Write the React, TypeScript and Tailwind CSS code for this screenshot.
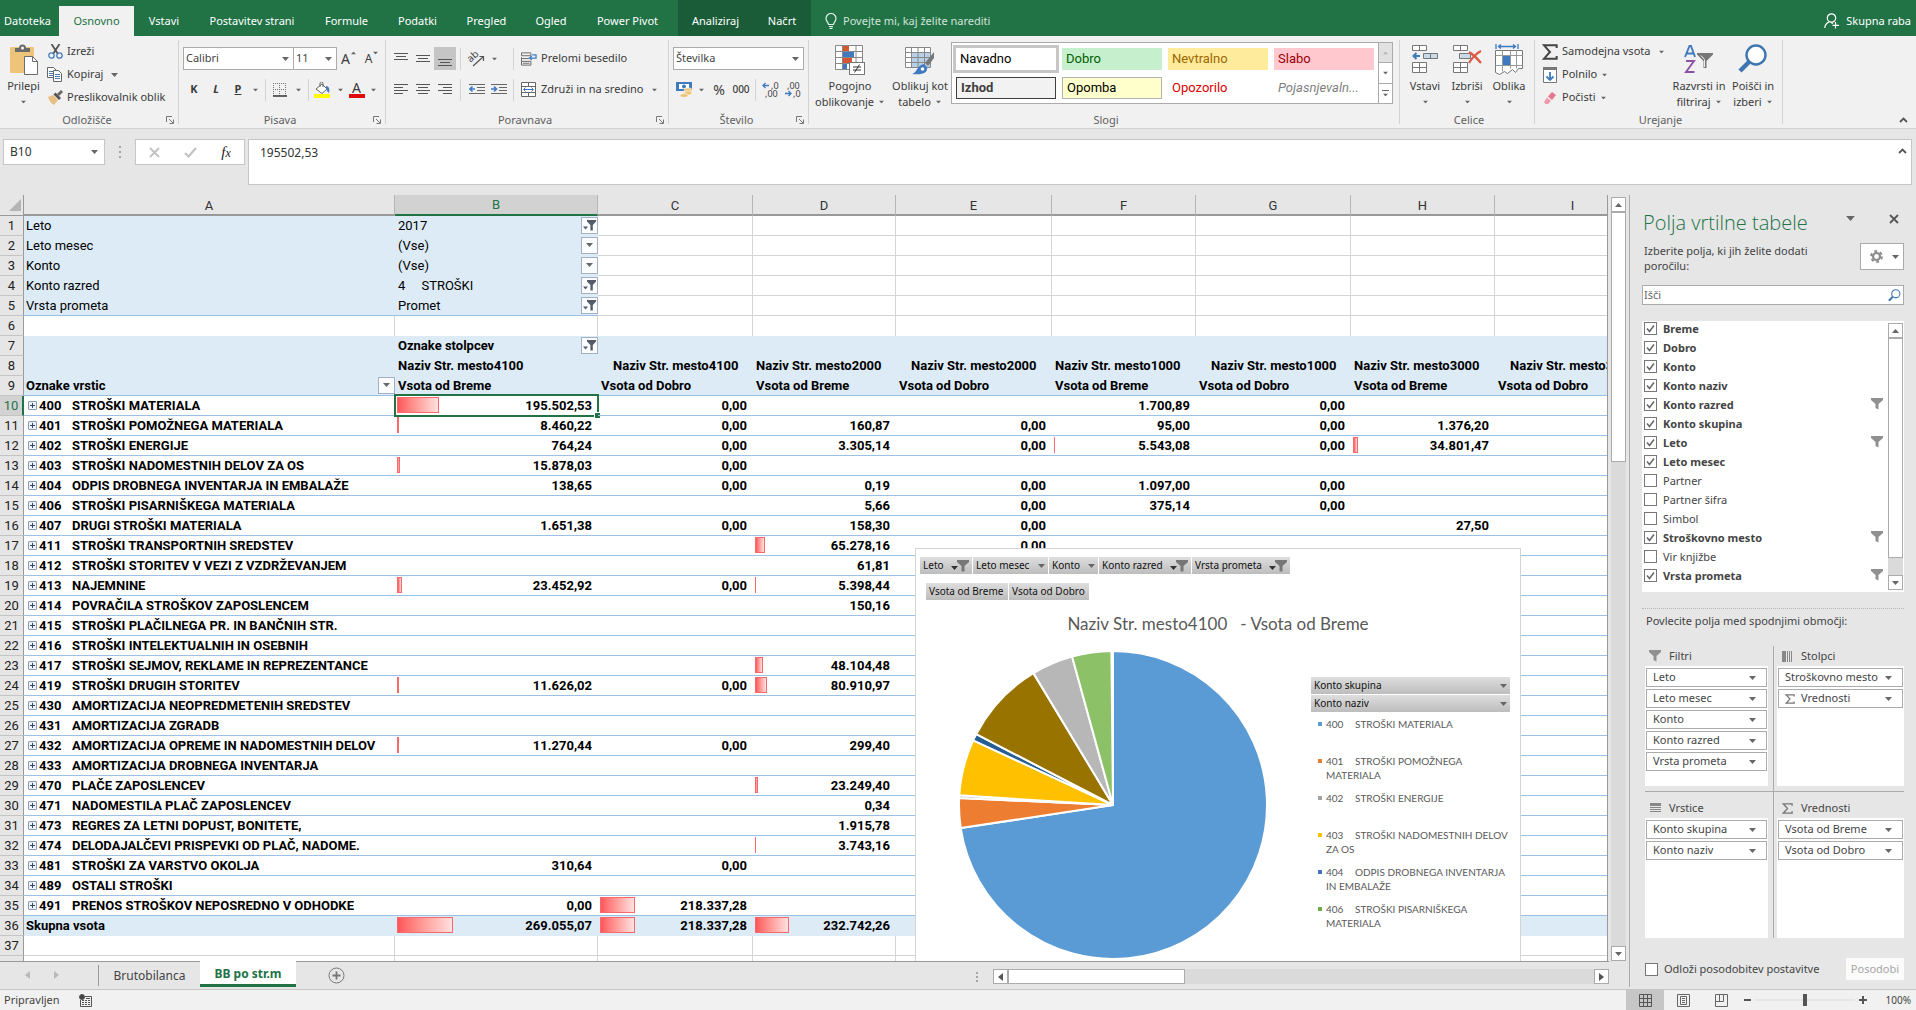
import { ReactNode } from "react";
import clsx from "clsx";

const ribbonTabs = [
  { text: "Datoteka", width: "w-[55px] mr-1" },
  { text: "Osnovno", width: "w-[75px]", active: true },
  { text: "Vstavi", width: "w-[60px]" },
  { text: "Postavitev strani", width: "w-[116px]" },
  { text: "Formule", width: "w-[73px]" },
  { text: "Podatki", width: "w-[69px]" },
  { text: "Pregled", width: "w-[69px]" },
  { text: "Ogled", width: "w-[60px]" },
  { text: "Power Pivot", width: "w-[93px] mr-1" },
  { text: "Analiziraj", width: "w-[75px]", context: true },
  { text: "Načrt", width: "w-[58px]", context: true },
];

const styleCells = [
  { text: "Navadno", style: "bg-white text-black outline-3 outline-[#c6c6c6]" },
  { text: "Dobro", style: "bg-[#c6efce] text-[#006100]" },
  { text: "Nevtralno", style: "bg-[#ffeb9c] text-[#9c6500]" },
  { text: "Slabo", style: "bg-[#ffc7ce] text-[#9c0006]" },
  { text: "Izhod", style: "border border-[#3f3f3f] bg-[#f2f2f2] font-bold text-[#3f3f3f]" },
  { text: "Opomba", style: "border border-[#b2b2b2] bg-[#ffffcc] text-black" },
  { text: "Opozorilo", style: "text-[#e00000]" },
  { text: "Pojasnjevaln...", style: "text-[#7f7f7f] italic" },
];

const columns = [
  { name: "A", width: "w-[371px]" },
  { name: "B", width: "w-[203px]" },
  { name: "C", width: "w-[155px]" },
  { name: "D", width: "w-[143px]" },
  { name: "E", width: "w-[156px]" },
  { name: "F", width: "w-[144px]" },
  { name: "G", width: "w-[155px]" },
  { name: "H", width: "w-[144px]" },
  { name: "I", width: "w-[156px]" },
];

const pageFilters = [
  { label: "Leto", value: "2017", filtered: true },
  { label: "Leto mesec", value: "(Vse)", filtered: false },
  { label: "Konto", value: "(Vse)", filtered: false },
  { label: "Konto razred", value: "4     STROŠKI", filtered: true },
  { label: "Vrsta prometa", value: "Promet", filtered: true },
];

const places = ["4100", "4100", "2000", "2000", "1000", "1000", "3000", "3000"];

type Row = { code: string; name: string; values: string[]; bars?: number[] };

// bars holds the data bar width of each value column, in pixels
const rows: Row[] = [
  { code: "400", name: "STROŠKI MATERIALA", values: ["195.502,53", "0,00", "", "", "1.700,89", "0,00"], bars: [42] },
  { code: "401", name: "STROŠKI POMOŽNEGA MATERIALA", values: ["8.460,22", "0,00", "160,87", "0,00", "95,00", "0,00", "1.376,20"], bars: [2] },
  { code: "402", name: "STROŠKI ENERGIJE", values: ["764,24", "0,00", "3.305,14", "0,00", "5.543,08", "0,00", "34.801,47"], bars: [0, 0, 0, 0, 1, 0, 5] },
  { code: "403", name: "STROŠKI NADOMESTNIH DELOV ZA OS", values: ["15.878,03", "0,00"], bars: [3] },
  { code: "404", name: "ODPIS DROBNEGA INVENTARJA IN EMBALAŽE", values: ["138,65", "0,00", "0,19", "0,00", "1.097,00", "0,00"] },
  { code: "406", name: "STROŠKI PISARNIŠKEGA MATERIALA", values: ["", "", "5,66", "0,00", "375,14", "0,00"] },
  { code: "407", name: "DRUGI STROŠKI MATERIALA", values: ["1.651,38", "0,00", "158,30", "0,00", "", "", "27,50"] },
  { code: "411", name: "STROŠKI TRANSPORTNIH SREDSTEV", values: ["", "", "65.278,16", "0,00"], bars: [0, 0, 10] },
  { code: "412", name: "STROŠKI STORITEV V VEZI Z VZDRŽEVANJEM", values: ["", "", "61,81"] },
  { code: "413", name: "NAJEMNINE", values: ["23.452,92", "0,00", "5.398,44"], bars: [5, 0, 1] },
  { code: "414", name: "POVRAČILA STROŠKOV ZAPOSLENCEM", values: ["", "", "150,16"] },
  { code: "415", name: "STROŠKI PLAČILNEGA PR. IN BANČNIH STR.", values: [] },
  { code: "416", name: "STROŠKI INTELEKTUALNIH IN OSEBNIH", values: [] },
  { code: "417", name: "STROŠKI SEJMOV, REKLAME IN REPREZENTANCE", values: ["", "", "48.104,48"], bars: [0, 0, 8] },
  { code: "419", name: "STROŠKI DRUGIH STORITEV", values: ["11.626,02", "0,00", "80.910,97"], bars: [2, 0, 12] },
  { code: "430", name: "AMORTIZACIJA NEOPREDMETENIH SREDSTEV", values: [] },
  { code: "431", name: "AMORTIZACIJA ZGRADB", values: [] },
  { code: "432", name: "AMORTIZACIJA OPREME IN NADOMESTNIH DELOV", values: ["11.270,44", "0,00", "299,40"], bars: [2] },
  { code: "433", name: "AMORTIZACIJA DROBNEGA INVENTARJA", values: [] },
  { code: "470", name: "PLAČE ZAPOSLENCEV", values: ["", "", "23.249,40"], bars: [0, 0, 3] },
  { code: "471", name: "NADOMESTILA PLAČ ZAPOSLENCEV", values: ["", "", "0,34"] },
  { code: "473", name: "REGRES ZA LETNI DOPUST, BONITETE,", values: ["", "", "1.915,78"] },
  { code: "474", name: "DELODAJALČEVI PRISPEVKI OD PLAČ, NADOME.", values: ["", "", "3.743,16"], bars: [0, 0, 1] },
  { code: "481", name: "STROŠKI ZA VARSTVO OKOLJA", values: ["310,64", "0,00"] },
  { code: "489", name: "OSTALI STROŠKI", values: [] },
  { code: "491", name: "PRENOS STROŠKOV NEPOSREDNO V ODHODKE", values: ["0,00", "218.337,28"], bars: [0, 35] },
];

const totals = ["269.055,07", "218.337,28", "232.742,26", "", "", "", "", ""];
const totalBars = [56, 35, 34];

const slices = [
  { from: 0, to: 261.4, color: "#5b9bd5" },
  { from: 261.4, to: 272.6, color: "#ed7d31" },
  { from: 272.6, to: 273.6, color: "#b5b5b5" },
  { from: 273.6, to: 294.8, color: "#ffc000" },
  { from: 294.8, to: 297.4, color: "#255e91" },
  { from: 297.4, to: 328.9, color: "#997300" },
  { from: 328.9, to: 344.6, color: "#b7b7b7" },
  { from: 344.6, to: 359.4, color: "#8cc168" },
];

const legend = [
  { code: "400", name: "STROŠKI MATERIALA", color: "bg-[#5b9bd5]" },
  { code: "401", name: "STROŠKI POMOŽNEGA MATERIALA", color: "bg-[#ed7d31]" },
  { code: "402", name: "STROŠKI ENERGIJE", color: "bg-[#a5a5a5]" },
  { code: "403", name: "STROŠKI NADOMESTNIH DELOV ZA OS", color: "bg-[#ffc000]" },
  { code: "404", name: "ODPIS DROBNEGA INVENTARJA IN EMBALAŽE", color: "bg-[#4472c4]" },
  { code: "406", name: "STROŠKI PISARNIŠKEGA MATERIALA", color: "bg-[#70ad47]" },
];

const fields = [
  { name: "Breme", on: true },
  { name: "Dobro", on: true },
  { name: "Konto", on: true },
  { name: "Konto naziv", on: true },
  { name: "Konto razred", on: true, filtered: true },
  { name: "Konto skupina", on: true },
  { name: "Leto", on: true, filtered: true },
  { name: "Leto mesec", on: true },
  { name: "Partner", on: false },
  { name: "Partner šifra", on: false },
  { name: "Simbol", on: false },
  { name: "Stroškovno mesto", on: true, filtered: true },
  { name: "Vir knjižbe", on: false },
  { name: "Vrsta prometa", on: true, filtered: true },
];

/* ---------- small drawings ---------- */

const Arrow = ({ up = false, className = "" }: { up?: boolean; className?: string }) => (
  <svg width="7" height="4" viewBox="0 0 7 4" className={clsx("shrink-0 fill-[#666]", className)}>
    <path d={up ? "M0 4L3.5 0 7 4z" : "M0 0h7L3.5 4z"} />
  </svg>
);

const Side = ({ left = false, className = "fill-[#555]" }: { left?: boolean; className?: string }) => (
  <svg width="5" height="8" viewBox="0 0 5 8" className={className}>
    <path d={left ? "M5 0v8L0 4z" : "M0 0v8l5-4z"} />
  </svg>
);

const Funnel = ({ className = "fill-[#909090]" }: { className?: string }) => (
  <svg width="12" height="12" viewBox="0 0 12 12" className={clsx("shrink-0", className)}>
    <path d="M0 0h12v2L7.500 6v5.500L4.500 10V6L0 2z" />
  </svg>
);

const FilterMark = () => (
  <svg width="13" height="11" viewBox="0 0 13 11" className="fill-[#555b68]">
    <path d="M4 0h9v1.500L9.800 5v5.500H7.400V5L4 1.500z" />
    <path d="M0 6.500h5L2.500 9.500z" />
  </svg>
);

const Sigma = ({ className = "size-[11px] stroke-[#777]" }: { className?: string }) => (
  <svg viewBox="0 0 12 12" fill="none" strokeWidth="1.500" className={clsx("shrink-0", className)}>
    <path d="M11 3V1H1.500L6 6l-4.500 5H11V9" />
  </svg>
);

const Lines = ({ widths, y = 2, className = "" }: { widths: [number, number][]; y?: number; className?: string }) => (
  <svg width="16" height="16" viewBox="0 0 16 16" className={className}>
    {widths.map(([x, w], i) => (
      <rect key={i} x={x} y={y + i * 3} width={w} height="1" fill="#555" />
    ))}
  </svg>
);

const Launcher = () => (
  <button aria-label="Več možnosti" className="flex">
    <svg width="8" height="8" viewBox="0 0 8 8" fill="none" stroke="#777">
      <path d="M.5 6V.5H6M3 3l4 4M7.500 3.500v4h-4" />
    </svg>
  </button>
);

const PasteIcon = () => (
  <svg width="28" height="31" viewBox="0 0 28 31">
    <rect x="0" y="3" width="24" height="26" rx="1" fill="#eec37a" />
    <path d="M5 8V4h4a3.500 3.500 0 0 1 7 0h4v4z" fill="#6b6b6b" />
    <circle cx="12.500" cy="4" r="1.500" fill="#fff" />
    <path d="M14.500 12.500h8l5 5v13h-13z" fill="#fff" stroke="#6b6b6b" />
    <path d="M22.500 12.500v5h5" fill="none" stroke="#6b6b6b" />
  </svg>
);

const CutIcon = () => (
  <svg width="15" height="15" viewBox="0 0 15 15" fill="none">
    <path d="M3.500 0L10 10M11.500 0L5 10" stroke="#555" strokeWidth="1.800" />
    <circle cx="3.500" cy="11.500" r="2.700" stroke="#4a7ebb" strokeWidth="1.300" />
    <circle cx="11.500" cy="11.500" r="2.700" stroke="#4a7ebb" strokeWidth="1.300" />
  </svg>
);

const CopyIcon = () => (
  <svg width="16" height="15" viewBox="0 0 16 15" fill="#fff" stroke="#666">
    <path d="M.5.5h6l3 3v7h-9z" />
    <path d="M2 4.500h4M2 6.500h4M2 8.500h4" stroke="#4a7ebb" />
    <path d="M6.500 3.500h5l3 3v8h-8z" />
    <path d="M8 7.500h5M8 9.500h5M8 11.500h5" stroke="#4a7ebb" />
  </svg>
);

const BrushIcon = () => (
  <svg width="16" height="15" viewBox="0 0 16 15">
    <path d="M1 7l5-2 5 5-4 5c-2-1-5-4-6-8z" fill="#e9bf82" />
    <path d="M6.500 4.500l2-2 5.500 5.500-2 2z" fill="#555" />
    <path d="M10 4l4-4 2 2-4 4z" fill="#666" />
  </svg>
);

const BorderIcon = () => (
  <svg width="14" height="14" viewBox="0 0 14 14" fill="none" stroke="#777">
    <path d="M0 .5h14M0 6.500h14M.5 0v13M6.500 0v13M12.500 0v13" strokeDasharray="1 1" />
    <path d="M0 13h14" stroke="#333" strokeWidth="1.500" />
  </svg>
);

const BucketIcon = () => (
  <svg width="17" height="16" viewBox="0 0 17 16">
    <path d="M2 7l6-5 5 5-5 4.500z" fill="#fff" stroke="#666" />
    <path d="M6 5V1.500a1.500 1.500 0 0 1 3 0V5" fill="none" stroke="#666" />
    <path d="M12 4c3 0 4 3 3 7-2-1-2-3-3-4z" fill="#4a7ebb" />
    <rect x="0" y="12" width="16" height="4" fill="#ffff00" />
  </svg>
);

const WrapIcon = () => (
  <svg width="17" height="16" viewBox="0 0 17 16" fill="none" stroke="#666">
    <path d="M.5 1.500h10v3h-10zM.5 7.500h8M.5 10.500h10v4h-10zM.5 6v8M2 12.500h7" />
    <path d="M12 3.500h4v3.500H9.500M11.500 4.800L9 7l2.500 2.200" stroke="#3f7ac0" strokeWidth="1.300" />
  </svg>
);

const MergeIcon = () => (
  <svg width="16" height="16" viewBox="0 0 16 16" fill="#fff" stroke="#666">
    <path d="M.5.500h14v14H.5zM.5 4.500h14M.5 10.500h14M7.500.500v4M7.500 10.500v4" />
    <path d="M2.500 7.500h10M4.500 5.500l-2 2 2 2M10.500 5.500l2 2-2 2" fill="none" stroke="#3f7ac0" />
  </svg>
);

const IndentIcon = ({ right = false }: { right?: boolean }) => (
  <svg width="16" height="14" viewBox="0 0 16 14" fill="none" stroke="#666">
    <path d="M0 1.500h16M8 4.500h8M8 7.500h8M0 10.500h16" />
    <path d={right ? "M0 6h5M3 3.500L5.500 6 3 8.500" : "M1 6h5M3.500 3.500L1 6l2.500 2.500"} stroke="#3f7ac0" strokeWidth="1.600" />
  </svg>
);

const MoneyIcon = () => (
  <svg width="17" height="17" viewBox="0 0 17 17">
    <rect x="0" y="1" width="16" height="9" fill="#3f7ac0" />
    <path d="M3 3h10v5H3z" fill="#fff" />
    <circle cx="8" cy="5.500" r="2" fill="#3f7ac0" />
    <ellipse cx="12" cy="9" rx="4" ry="2.200" fill="#eec37a" stroke="#fff" strokeWidth=".6" />
    <ellipse cx="12" cy="12" rx="4" ry="2.200" fill="#eec37a" stroke="#fff" strokeWidth=".6" />
    <ellipse cx="8" cy="14.500" rx="4" ry="2" fill="#eec37a" stroke="#fff" strokeWidth=".6" />
  </svg>
);

const DecimalIcon = ({ more = false }: { more?: boolean }) => (
  <svg width="18" height="20" viewBox="0 0 18 20" fill="none">
    <g fill="#444" fontFamily="Noto Sans, sans-serif" fontSize="9">
      <text x={more ? 9 : 3} y="9">{more ? ",0" : ",00"}</text>
      <text x={more ? 3 : 9} y="17">{more ? ",00" : ",0"}</text>
    </g>
    <path d={more ? "M1 5.500h6M3.500 3L1 5.500 3.500 8" : "M1 13.500h6M4.500 11L7 13.500 4.500 16"} stroke="#3f7ac0" strokeWidth="1.300" />
  </svg>
);

const ConditionalIcon = () => (
  <svg width="32" height="32" viewBox="0 0 32 32">
    <path d="M1.500 1.500h27v24h-27zM8.500 1.500v24M22 1.500v24M1.500 7.500h27M1.500 13.500h27M1.500 19.500h27" fill="#fff" stroke="#888" />
    <path d="M9 2h6v5H9zM9 14h9v5H9z" fill="#d65532" />
    <path d="M9 8h11v5H9zM9 20h4v5H9z" fill="#3f7ac0" />
    <rect x="15.500" y="18.500" width="15" height="12" fill="#fff" stroke="#777" />
    <path d="M19 23h8M19 26h8M25.500 20.500l-5 8" stroke="#333" fill="none" />
  </svg>
);

const TableIcon = () => (
  <svg width="32" height="32" viewBox="0 0 32 32">
    <path d="M1.500 3.500h25v20h-25z" fill="#fff" />
    <path d="M8 9h18v14H8z" fill="#b8cfe8" />
    <path d="M1.500 3.500h25v20h-25zM7.500 3.500v20M14 3.500v20M20.500 3.500v20M1.500 8.500h25M1.500 13.500h25M1.500 18.500h25" fill="none" stroke="#888" />
    <path d="M30 8v6l-6 8-3-3z" fill="#777" />
    <path d="M20 20l3 3c1 6-4 8-15 7 5-1 5-9 12-10z" fill="#3f7ac0" />
    <circle cx="18.500" cy="25" r="1.800" fill="#fff" />
  </svg>
);

const InsertIcon = () => (
  <svg width="30" height="30" viewBox="0 0 30 30" fill="#fff" stroke="#777">
    <path d="M2.500 1.500h14v5h-14zM9.500 1.500v5M2.500 18.500h14v10h-14zM9.500 18.500v10M2.500 23.500h14" />
    <path d="M13.500 9.500h14v5h-14zM20.500 9.500v5" fill="#c9dbe8" />
    <path d="M4 12h6M6.500 9L3.500 12l3 3" fill="none" stroke="#3f7ac0" strokeWidth="2" />
  </svg>
);

const DeleteIcon = () => (
  <svg width="31" height="30" viewBox="0 0 31 30" fill="#fff" stroke="#777">
    <path d="M1.500 1.500h14v5h-14zM8.500 1.500v5M1.500 18.500h14v10h-14zM8.500 18.500v10M1.500 23.500h14" />
    <path d="M7.500 9.500h11v5h-11z" fill="#c9dbe8" />
    <path d="M17 8c5 3 8 6 12 11M29 7c-6 3-9 7-12 12" fill="none" stroke="#dd5a43" strokeWidth="2.200" />
  </svg>
);

const FormatIcon = () => (
  <svg width="30" height="31" viewBox="0 0 30 31" fill="none">
    <path d="M2 0v5M24 0v5M4 2.500h18M7 .5l-2.500 2L7 4.500M19 .5l2.500 2-2.500 2" stroke="#3f7ac0" strokeWidth="1.300" />
    <path d="M1.500 6.500h27v18h-4l-3 4-3-3-5 4-3-2-5 3-4-2z" fill="#fff" stroke="#777" />
    <path d="M1.500 11.500h27M1.500 21.500h27M8.500 6.500v21M16.500 6.500v18M22.500 6.500v18" stroke="#999" />
    <path d="M9 12h7v9H9z" fill="#3f7ac0" />
  </svg>
);

const FillIcon = () => (
  <svg width="15" height="16" viewBox="0 0 15 16">
    <path d="M.5.500h13v15H.5z" fill="#fff" stroke="#777" />
    <path d="M0 0h14v3H0z" fill="#777" />
    <path d="M7 5v8M3.500 9.500L7 13l3.500-3.500" fill="none" stroke="#3f7ac0" strokeWidth="1.800" />
  </svg>
);

const EraserIcon = () => (
  <svg width="14" height="14" viewBox="0 0 14 14">
    <path d="M9 1l4 3-4 5-4-3.500z" fill="#e5768b" />
    <path d="M4 6.500l4 3.500-3 3H2.500L1 11z" fill="#ee9aaa" />
  </svg>
);

const SortIcon = () => (
  <svg width="30" height="30" viewBox="0 0 30 30">
    <path d="M1 13L5.500 2h1.500L11 13M3 9.500h6.500" fill="none" stroke="#3f7ac0" strokeWidth="1.900" />
    <path d="M2 17h8l-8 11h8.500" fill="none" stroke="#8a52a5" strokeWidth="1.900" />
    <path d="M13 9h16v1.500L22.500 17v7h-3v-7L13 10.500z" fill="#777" />
    <path d="M17 11.500l3.500 4V23" fill="none" stroke="#eee" />
  </svg>
);

const FindIcon = ({ size = 30 }: { size?: number }) => (
  <svg width={size} height={size} viewBox="0 0 30 30">
    <path d="M11 18L2 27" stroke="#3f75b0" strokeWidth="4.500" />
    <circle cx="18" cy="11" r="9.500" fill="#fff" stroke="#3f75b0" strokeWidth="2.400" />
  </svg>
);

/* ---------- ribbon ---------- */

const Rule = () => <div className="my-1 w-px shrink-0 self-stretch bg-[#d2d2d2]" />;

const Group = ({ label, width, launcher, children }: { label: string; width: string; launcher?: boolean; children: ReactNode }) => (
  <>
    <section className={clsx("flex shrink-0 flex-col pt-1", width)}>
      <div className="flex h-[72px]">{children}</div>
      <div className="flex h-4 items-center pr-1">
        <span className="flex-1 pl-2 text-center text-[11px] text-[#5f5f5f]">{label}</span>
        {launcher && <Launcher />}
      </div>
    </section>
    <Rule />
  </>
);

const BigButton = ({ icon, lines, width }: { icon: ReactNode; lines: string[]; width: string }) => (
  <button className={clsx("flex flex-col items-center pt-1 whitespace-nowrap", width)}>
    <span className="flex h-[34px] items-start">{icon}</span>
    <span className="leading-4">{lines[0]}</span>
    {lines[1] ? (
      <span className="flex items-center gap-1 leading-4">
        {lines[1]}
        <Arrow className="scale-75" />
      </span>
    ) : (
      <Arrow className="mt-[6px] scale-75" />
    )}
  </button>
);

const SmallButton = ({ icon, text, arrow }: { icon: ReactNode; text: string; arrow?: string }) => (
  <button className="flex h-[23px] items-center gap-1 whitespace-nowrap">
    <span className="flex w-4 justify-center">{icon}</span>
    {text}
    {arrow && <Arrow className={arrow} />}
  </button>
);

const Tool = ({ children, label, width = "w-[22px]", active }: { children: ReactNode; label: string; width?: string; active?: boolean }) => (
  <button aria-label={label} className={clsx("flex h-[23px] items-center justify-center", width, active && "bg-[#c5c5c5]")}>
    {children}
  </button>
);

const Select = ({ label, value, width }: { label: string; value: string; width: string }) => (
  <div className={clsx("relative flex h-[23px] items-center border border-[#ababab] bg-white", width)}>
    <select aria-label={label} className="h-full w-full appearance-none pl-[2px] text-[11px] text-[#444] outline-none">
      <option>{value}</option>
    </select>
    <Arrow className="pointer-events-none absolute right-1" />
  </div>
);

const Divider = () => <div className="h-[22px] w-px shrink-0 bg-[#d2d2d2]" />;

const Ribbon = () => (
  <header className="text-[11px] text-[#3b3b3b]">
    <nav className="flex h-9 items-end bg-[#217346] text-white">
      {ribbonTabs.map((tab) => (
        <button
          key={tab.text}
          className={clsx(
            "shrink-0 text-center whitespace-nowrap",
            tab.width,
            tab.context ? "h-9 bg-[#1b5c38] pt-[6px]" : "h-[30px]",
            tab.active && "bg-[#f1f1f1] text-[#217346]",
          )}
        >
          {tab.text}
        </button>
      ))}
      <label className="ml-[14px] flex h-[30px] flex-1 items-center gap-[6px] text-[#d3e3da]">
        <svg width="12" height="16" viewBox="0 0 12 16" fill="none" stroke="#e4efe8" strokeWidth="1.200">
          <path d="M3.500 11.500c0-2-2.500-3-2.500-6a5 5 0 0 1 10 0c0 3-2.500 4-2.500 6zM4 13.500h4M4.500 15.300h3" />
        </svg>
        <input className="w-[180px] outline-none placeholder:text-[#d3e3da]" placeholder="Povejte mi, kaj želite narediti" />
      </label>
      <button className="flex h-[30px] items-center gap-[7px] pr-[5px]">
        <svg width="15" height="16" viewBox="0 0 15 16" fill="none" stroke="#fff" strokeWidth="1.200">
          <circle cx="7.500" cy="5" r="4.200" />
          <path d="M.7 15c.3-3 2-5 4.300-6M7 9.500l2 1M11.500 9v6.500M8.500 12.300H15" />
        </svg>
        Skupna raba
      </button>
    </nav>

    <div className="flex h-[93px] border-b border-[#d2d2d2] bg-[#f1f1f1]">
      <Group label="Odložišče" width="w-[178px]" launcher>
        <BigButton icon={<PasteIcon />} lines={["Prilepi"]} width="w-[47px]" />
        <div>
          <SmallButton icon={<CutIcon />} text="Izreži" />
          <SmallButton icon={<CopyIcon />} text="Kopiraj" arrow="ml-1" />
          <SmallButton icon={<BrushIcon />} text="Preslikovalnik oblik" />
        </div>
      </Group>

      <Group label="Pisava" width="w-[206px]" launcher>
        <div className="flex flex-col gap-2 pt-[7px] pl-[4px]">
          <div className="flex">
            <Select label="Pisava" value="Calibri" width="w-[111px]" />
            <Select label="Velikost pisave" value="11" width="w-[44px] -ml-px" />
            <Tool label="Povečaj pisavo" width="w-6">
              <span className="text-[14px]">A</span>
              <Arrow up className="mb-3 scale-75 fill-[#3f75b0]" />
            </Tool>
            <Tool label="Pomanjšaj pisavo">
              <span className="text-[12px]">A</span>
              <Arrow className="mb-3 scale-75 fill-[#3f75b0]" />
            </Tool>
          </div>
          <div className="flex items-center">
            <Tool label="Krepko">
              <b>K</b>
            </Tool>
            <Tool label="Ležeče">
              <b className="italic">L</b>
            </Tool>
            <Tool label="Podčrtano">
              <b className="underline">P</b>
            </Tool>
            <Tool label="Vrsta podčrtave" width="w-3">
              <Arrow className="scale-75" />
            </Tool>
            <span className="w-1" />
            <Divider />
            <Tool label="Obrobe" width="w-7">
              <BorderIcon />
            </Tool>
            <Tool label="Vrste obrob" width="w-2">
              <Arrow className="scale-75" />
            </Tool>
            <span className="w-[6px]" />
            <Divider />
            <Tool label="Barva polnila" width="w-[27px]">
              <BucketIcon />
            </Tool>
            <Tool label="Barve polnila" width="w-2">
              <Arrow className="scale-75" />
            </Tool>
            <Tool label="Barva pisave" width="w-[25px]">
              <span className="w-4 border-b-4 border-[#e00b0b] text-[14px] leading-3">A</span>
            </Tool>
            <Tool label="Barve pisave" width="w-2">
              <Arrow className="scale-75" />
            </Tool>
          </div>
        </div>
      </Group>

      <Group label="Poravnava" width="w-[282px]" launcher>
        <div className="flex flex-col gap-2 pt-[7px] pl-1">
          <div className="flex items-center">
            <Tool label="Poravnaj na vrh">
              <Lines widths={[[1, 14], [3, 10], [1, 14]]} />
            </Tool>
            <Tool label="Poravnaj na sredino">
              <Lines widths={[[1, 14], [3, 10], [1, 14]]} y={4} />
            </Tool>
            <Tool label="Poravnaj na dno" active>
              <Lines widths={[[1, 14], [3, 10], [1, 14]]} y={8} />
            </Tool>
            <span className="w-1" />
            <Divider />
            <Tool label="Usmerjenost" width="w-[29px]">
              <svg width="20" height="18" viewBox="0 0 20 18" fill="none" stroke="#555">
                <text x="2" y="10" fontSize="10" fill="#444" stroke="none" transform="rotate(-42 7 8)" fontFamily="Noto Sans, sans-serif">
                  ab
                </text>
                <path d="M7 16L17 7M13.500 6.500h4V11" strokeWidth="1.200" />
              </svg>
            </Tool>
            <Tool label="Vrste usmerjenosti" width="w-2">
              <Arrow className="scale-75" />
            </Tool>
            <span className="w-[15px]" />
            <Divider />
            <span className="w-[7px]" />
            <SmallButton icon={<WrapIcon />} text="Prelomi besedilo" />
          </div>
          <div className="flex items-center">
            <Tool label="Poravnaj levo">
              <Lines widths={[[1, 14], [1, 9], [1, 14], [1, 9]]} />
            </Tool>
            <Tool label="Na sredino">
              <Lines widths={[[1, 14], [3, 10], [1, 14], [3, 10]]} />
            </Tool>
            <Tool label="Poravnaj desno">
              <Lines widths={[[1, 14], [6, 9], [1, 14], [6, 9]]} />
            </Tool>
            <span className="w-1" />
            <Divider />
            <span className="w-[5px]" />
            <Tool label="Zmanjšaj zamik">
              <IndentIcon />
            </Tool>
            <Tool label="Povečaj zamik">
              <IndentIcon right />
            </Tool>
            <span className="w-[3px]" />
            <Divider />
            <span className="w-[7px]" />
            <SmallButton icon={<MergeIcon />} text="Združi in na sredino" arrow="ml-1 scale-75" />
          </div>
        </div>
      </Group>

      <Group label="Število" width="w-[139px]" launcher>
        <div className="flex flex-col gap-2 pt-[7px] pl-1">
          <Select label="Oblika števila" value="Številka" width="w-[131px]" />
          <div className="flex items-center">
            <Tool label="Valuta">
              <MoneyIcon />
            </Tool>
            <Tool label="Valute" width="w-3">
              <Arrow className="scale-75" />
            </Tool>
            <Tool label="Odstotek" width="w-6">
              <span className="text-[14px]">%</span>
            </Tool>
            <Tool label="Ločilo tisočic" width="w-[20px]">
              <span className="text-[10px] font-medium">000</span>
            </Tool>
            <span className="w-1" />
            <Divider />
            <span className="w-1" />
            <Tool label="Več decimalk">
              <DecimalIcon more />
            </Tool>
            <Tool label="Manj decimalk">
              <DecimalIcon />
            </Tool>
          </div>
        </div>
      </Group>

      <Group label="Slogi" width="w-[590px]">
        <BigButton icon={<ConditionalIcon />} lines={["Pogojno", "oblikovanje"]} width="w-[82px]" />
        <BigButton icon={<TableIcon />} lines={["Oblikuj kot", "tabelo"]} width="w-[58px]" />
        <div className="mt-[2px] ml-[2px] flex h-[62px] border border-[#ababab] bg-white">
          <div className="grid grid-cols-4 gap-[6px] p-[4px] pt-[5px]">
            {styleCells.map((cell) => (
              <button key={cell.text} className={clsx("h-[22px] w-[100px] pl-1 text-left font-[Roboto,sans-serif] text-[13px]", cell.style)}>
                {cell.text}
              </button>
            ))}
          </div>
          <div className="flex w-[14px] flex-col divide-y divide-[#ababab] border-l border-[#ababab]">
            <button aria-label="Gor" className="flex flex-1 items-center justify-center bg-[#e1e1e1]">
              <Arrow up className="scale-75 fill-[#b5b5b5]" />
            </button>
            <button aria-label="Dol" className="flex flex-1 items-center justify-center">
              <Arrow className="scale-75" />
            </button>
            <button aria-label="Več" className="flex flex-1 flex-col items-center justify-center gap-[2px]">
              <span className="h-px w-[7px] bg-[#666]" />
              <Arrow className="scale-75" />
            </button>
          </div>
        </div>
      </Group>

      <Group label="Celice" width="w-[134px]">
        <span className="w-1" />
        <BigButton icon={<InsertIcon />} lines={["Vstavi"]} width="w-[42px]" />
        <BigButton icon={<DeleteIcon />} lines={["Izbriši"]} width="w-[42px]" />
        <BigButton icon={<FormatIcon />} lines={["Oblika"]} width="w-[42px]" />
      </Group>

      <Group label="Urejanje" width="w-[247px]">
        <div className="w-[132px] pl-[7px]">
          <SmallButton icon={<Sigma className="size-4 stroke-[#444]" />} text="Samodejna vsota" arrow="ml-1 scale-75" />
          <SmallButton icon={<FillIcon />} text="Polnilo" arrow="scale-75" />
          <SmallButton icon={<EraserIcon />} text="Počisti" arrow="scale-75" />
        </div>
        <BigButton icon={<SortIcon />} lines={["Razvrsti in", "filtriraj"]} width="w-[64px]" />
        <BigButton icon={<FindIcon />} lines={["Poišči in", "izberi"]} width="w-[44px]" />
      </Group>

      <div className="flex flex-1 items-end justify-end pr-2 pb-[5px]">
        <button aria-label="Strni trak">
          <Chevron />
        </button>
      </div>
    </div>
  </header>
);

const Chevron = () => (
  <svg width="9" height="6" viewBox="0 0 9 6" fill="none" stroke="#555" strokeWidth="1.800">
    <path d="M1 5l3.500-3.500L8 5" />
  </svg>
);

const FormulaBar = () => (
  <div className="flex h-14 items-start pt-[10px] pr-1 pl-[3px] text-[12px] text-[#333]">
    <div className="flex h-[26px] w-[102px] items-center border border-[#c6c6c6] bg-white pr-[6px]">
      <input aria-label="Polje z imenom" defaultValue="B10" className="min-w-0 flex-1 pl-[6px] outline-none" />
      <Arrow />
    </div>
    <div className="flex h-[26px] w-[30px] flex-col items-center justify-center gap-[3px]">
      <span className="size-[2px] bg-[#a5a5a5]" />
      <span className="size-[2px] bg-[#a5a5a5]" />
      <span className="size-[2px] bg-[#a5a5a5]" />
    </div>
    <div className="mr-[3px] flex h-[26px] w-[110px] items-center border border-[#c6c6c6] bg-white">
      <button aria-label="Prekliči" className="flex w-9 justify-center">
        <svg width="11" height="11" viewBox="0 0 11 11" stroke="#c3c3c3" strokeWidth="2">
          <path d="M1 1l9 9M10 1l-9 9" />
        </svg>
      </button>
      <button aria-label="Vnesi" className="flex w-9 justify-center">
        <svg width="13" height="11" viewBox="0 0 13 11" fill="none" stroke="#c3c3c3" strokeWidth="2.200">
          <path d="M1 6l3.500 3.500L12 1" />
        </svg>
      </button>
      <button aria-label="Vstavi funkcijo" className="flex w-9 items-baseline justify-center font-[Liberation_Serif,serif] text-[15px] text-[#222] italic">
        f<span className="text-[12px]">x</span>
      </button>
    </div>
    <div className="flex h-[46px] flex-1 items-start border border-[#c6c6c6] bg-white pr-1">
      <textarea aria-label="Vnosna vrstica" defaultValue="195502,53" className="h-10 flex-1 resize-none pt-1 pl-[11px] leading-[18px] outline-none" />
      <button aria-label="Strni vnosno vrstico" className="pt-2">
        <Chevron />
      </button>
    </div>
  </div>
);

/* ---------- sheet ---------- */

const CellFilter = ({ filtered = false }: { filtered?: boolean }) => (
  <button aria-label="Filter" className="mb-px flex h-[17px] w-[17px] shrink-0 items-center justify-center border border-[#a3afc2] bg-[#fbfcfe]">
    {filtered ? <FilterMark /> : <Arrow />}
  </button>
);

const RowHead = ({ n }: { n: number }) => (
  <th
    className={clsx(
      "border-b border-b-[#c4c4c4] p-0 text-center font-normal",
      n === 10 ? "border-r-2 border-r-[#217346] bg-[#d2d2d2] text-[#217346]" : "border-r border-r-[#999] bg-[#e6e6e6] text-[#222]",
    )}
  >
    {n <= 37 ? n : ""}
  </th>
);

const Value = ({ text = "", bar = 0 }: { text?: string; bar?: number }) => (
  <div className="flex h-[19px] items-center pr-[6px] pl-[2px]">
    {bar > 0 && (
      <span
        className={clsx("mb-px h-4", bar > 2 ? "border border-[#f8696b] bg-linear-to-r from-[#ff555a] to-[#ffe0e0]" : "bg-[#f8696b]")}
        style={{ width: bar }}
      />
    )}
    <span className="ml-auto">{text}</span>
  </div>
);

const grid = "border-r border-b border-[#d4d4d4]";

const Sheet = () => (
  <table className="w-[1651px] table-fixed border-separate border-spacing-0 font-[Roboto,sans-serif] text-[13px] leading-[19px] whitespace-nowrap text-black [&_td]:p-0">
    <thead>
      <tr className="h-5 text-[#333]">
        <th className="w-6 border-r border-b border-[#999] bg-[#e6e6e6] p-0">
          <svg width="12" height="12" viewBox="0 0 12 12" className="ml-[9px]">
            <path d="M12 0v12H0z" fill="#b4b4b4" />
          </svg>
        </th>
        {columns.map((col) => (
          <th
            key={col.name}
            className={clsx(
              "border-r border-r-[#b5b5b5] p-0 text-center font-normal",
              col.width,
              col.name === "B" ? "border-b-2 border-b-[#217346] bg-[#d2d2d2] text-[#217346]" : "border-b border-b-[#999]",
            )}
          >
            {col.name}
          </th>
        ))}
      </tr>
    </thead>
    <tbody>
      {pageFilters.map((f, i) => (
        <tr key={f.label} className="h-5">
          <RowHead n={i + 1} />
          <td className={clsx("bg-[#ddebf7]", i === 4 ? "border-b border-[#9bc2e6]" : "border-b border-[#ddebf7]")}>
            <span className="pl-[2px]">{f.label}</span>
          </td>
          <td className={clsx("bg-[#ddebf7]", i === 4 ? "border-b border-[#9bc2e6]" : "border-b border-[#ddebf7]")}>
            <div className="flex h-[19px] items-center justify-between pl-[3px]">
              <span className="whitespace-pre">{f.value}</span>
              <CellFilter filtered={f.filtered} />
            </div>
          </td>
          {columns.slice(2).map((col) => (
            <td key={col.name} className={grid} />
          ))}
        </tr>
      ))}
      <tr className="h-5">
        <RowHead n={6} />
        {columns.map((col) => (
          <td key={col.name} className="border-r border-[#d4d4d4]" />
        ))}
      </tr>
      <tr className="h-5 bg-[#ddebf7] font-bold">
        <RowHead n={7} />
        <td />
        <td className="border-b border-[#ddebf7]">
          <div className="flex h-[19px] items-center justify-between pl-[3px]">
            Oznake stolpcev
            <CellFilter filtered />
          </div>
        </td>
        <td colSpan={7} />
      </tr>
      <tr className="h-5 bg-[#ddebf7] font-bold">
        <RowHead n={8} />
        <td />
        {places.map((place, i) => (
          <td key={i} className="border-b border-[#ddebf7]">
            <span className={i % 2 ? "pl-[15px]" : "pl-[3px]"}>Naziv Str. mesto{place}</span>
          </td>
        ))}
      </tr>
      <tr className="h-5 bg-[#ddebf7] font-bold">
        <RowHead n={9} />
        <td className="border-b border-[#9bc2e6]">
          <div className="flex h-[19px] items-center justify-between pl-[2px]">
            Oznake vrstic
            <CellFilter />
          </div>
        </td>
        {places.map((_, i) => (
          <td key={i} className="border-b border-[#9bc2e6]">
            <span className="pl-[3px]">Vsota od {i % 2 ? "Dobro" : "Breme"}</span>
          </td>
        ))}
      </tr>
      {rows.map((row, r) => (
        <tr key={row.code} className="h-5 font-bold">
          <RowHead n={r + 10} />
          <td className="border-b border-[#9bc2e6]">
            <div className="flex items-center pl-1">
              <button
                aria-label={`Razširi ${row.code}`}
                className="mr-[2px] flex size-[9px] items-center justify-center rounded-[1px] border border-[#8c9bb5] bg-[#eef3fa]"
              >
                <svg width="5" height="5" viewBox="0 0 5 5" fill="#33466b">
                  <path d="M2 0h1v2h2v1H3v2H2V3H0V2h2z" />
                </svg>
              </button>
              <span className="w-[33px]">{row.code}</span>
              {row.name}
            </div>
          </td>
          {places.map((_, i) => (
            <td key={i} className="relative border-b border-[#9bc2e6]">
              <Value text={row.values[i]} bar={row.bars?.[i]} />
              {r === 0 && i === 0 && (
                <div className="absolute -inset-x-px -top-[2px] -bottom-[2px] border-2 border-[#217346]">
                  <span className="absolute -right-[3px] -bottom-[3px] size-[6px] border-t border-l border-white bg-[#217346]" />
                </div>
              )}
            </td>
          ))}
        </tr>
      ))}
      <tr className="h-5 bg-[#ddebf7] font-bold">
        <RowHead n={36} />
        <td className="border-b border-[#ddebf7]">
          <span className="pl-[2px]">Skupna vsota</span>
        </td>
        {totals.map((text, i) => (
          <td key={i} className="border-b border-[#ddebf7]">
            <Value text={text} bar={totalBars[i]} />
          </td>
        ))}
      </tr>
      {[37, 38].map((n) => (
        <tr key={n} className="h-5">
          <RowHead n={n} />
          {columns.map((col) => (
            <td key={col.name} className={grid} />
          ))}
        </tr>
      ))}
    </tbody>
  </table>
);

/* ---------- chart ---------- */

const point = (deg: number) => {
  const a = (deg * Math.PI) / 180;
  return `${(155 + 154 * Math.sin(a)).toFixed(2)} ${(155 - 154 * Math.cos(a)).toFixed(2)}`;
};

const ChartButton = ({ text, mark, className = "" }: { text: string; mark?: "arrow" | "filter"; className?: string }) => (
  <button
    className={clsx("flex h-[17px] items-center justify-between bg-linear-to-b from-[#dedede] to-[#bdbdbd] px-[3px] whitespace-nowrap text-[#111]", className)}
  >
    {text}
    {mark === "arrow" && <Arrow className="fill-[#333]" />}
    {mark === "filter" && (
      <svg width="18" height="12" viewBox="0 0 18 12">
        <path d="M0 6h7l-3.500 4z" fill="#333" />
        <path d="M6 0h12v2l-4.500 4v5.500h-3V6L6 2z" fill="#777" />
      </svg>
    )}
  </button>
);

const PieChart = () => (
  <figure className="absolute top-[353px] left-[915px] flex h-[430px] w-[606px] flex-col border border-[#d4d4d4] bg-white pt-2 text-[10px]">
    <div className="flex gap-px pl-1">
      <ChartButton text="Leto" mark="filter" className="w-[52px]" />
      <ChartButton text="Leto mesec" mark="arrow" className="w-[75px]" />
      <ChartButton text="Konto" mark="arrow" className="w-[49px]" />
      <ChartButton text="Konto razred" mark="filter" className="w-[92px]" />
      <ChartButton text="Vrsta prometa" mark="filter" className="w-[98px]" />
    </div>
    <div className="mt-[9px] flex gap-px pl-[10px]">
      <ChartButton text="Vsota od Breme" className="w-[82px]" />
      <ChartButton text="Vsota od Dobro" className="w-[80px]" />
    </div>
    <figcaption className="mt-3 text-center font-[Lato,sans-serif] text-[17px] leading-6 whitespace-pre text-[#595959]">
      {"Naziv Str. mesto4100   - Vsota od Breme"}
    </figcaption>
    <div className="mt-[14px] flex justify-between pr-[10px] pl-[42px]">
      <svg width="310" height="310" viewBox="0 0 310 310" stroke="#fff" strokeWidth="2" strokeLinejoin="round">
        {slices.map((s) => (
          <path
            key={s.from}
            fill={s.color}
            d={`M155 155L${point(s.from)}A154 154 0 ${s.to - s.from > 180 ? 1 : 0} 1 ${point(s.to)}Z`}
          />
        ))}
      </svg>
      <div className="mt-[27px] flex w-[199px] flex-col gap-px">
        <ChartButton text="Konto skupina" mark="arrow" />
        <ChartButton text="Konto naziv" mark="arrow" />
        <ul className="mt-1 pl-[7px] font-[Lato,sans-serif] leading-[14px] text-[#595959]">
          {legend.map((item) => (
            <li key={item.code} className="flex h-[37px] gap-1">
              <span className={clsx("mt-[5px] size-1 shrink-0", item.color)} />
              <p>
                <span className="inline-block w-[29px]">{item.code}</span>
                {item.name}
              </p>
            </li>
          ))}
        </ul>
      </div>
    </div>
  </figure>
);

/* ---------- scrollbars and tabs ---------- */

const ScrollButton = ({ children, label }: { children: ReactNode; label: string }) => (
  <button aria-label={label} className="flex size-[15px] shrink-0 items-center justify-center border border-[#ababab] bg-white">
    {children}
  </button>
);

const VerticalScroll = ({ thumb }: { thumb: string }) => (
  <div className="flex w-[15px] shrink-0 flex-col bg-[#dadada]">
    <ScrollButton label="Gor">
      <Arrow up />
    </ScrollButton>
    <div className={clsx("border border-[#ababab] bg-white", thumb)} />
    <div className="flex-1" />
    <ScrollButton label="Dol">
      <Arrow />
    </ScrollButton>
  </div>
);

const SheetTabs = () => (
  <div className="mr-5 flex h-7 items-start border-t border-[#999]">
    <div className="flex w-[98px] items-center gap-6 pt-[9px] pl-[25px]">
      <button aria-label="Prejšnji list">
        <Side left className="fill-[#b8b8b8]" />
      </button>
      <button aria-label="Naslednji list">
        <Side className="fill-[#b8b8b8]" />
      </button>
    </div>
    <button className="mt-[3px] h-[21px] w-[102px] border-l border-[#999] text-[12px] text-[#444]">Brutobilanca</button>
    <button className="-mt-px h-[26px] w-24 border-b-3 border-[#217346] bg-white pt-[3px] text-[12px] font-bold text-[#217346]">BB po str.m</button>
    <button aria-label="Nov list" className="mt-[5px] ml-8">
      <svg width="17" height="17" viewBox="0 0 17 17" fill="none" stroke="#777">
        <circle cx="8.500" cy="8.500" r="7.500" />
        <path d="M8.500 4.500v8M4.500 8.500h8" strokeWidth="1.800" />
      </svg>
    </button>
    <div className="ml-auto flex w-[633px] items-center pt-[7px]">
      <div className="mr-[15px] flex flex-col gap-[2px]">
        <span className="size-[2px] bg-[#a5a5a5]" />
        <span className="size-[2px] bg-[#a5a5a5]" />
        <span className="size-[2px] bg-[#a5a5a5]" />
      </div>
      <div className="flex flex-1 bg-[#dadada]">
        <ScrollButton label="Levo">
          <Side left />
        </ScrollButton>
        <div className="h-[15px] w-[177px] border border-[#ababab] bg-white" />
        <div className="flex-1" />
        <ScrollButton label="Desno">
          <Side />
        </ScrollButton>
      </div>
    </div>
  </div>
);

/* ---------- field pane ---------- */

const Check = ({ id, on = false }: { id: string; on?: boolean }) => (
  <span className="relative flex size-[13px] shrink-0">
    <input id={id} type="checkbox" defaultChecked={on} className="peer size-[13px] appearance-none border border-[#777] bg-white" />
    <svg viewBox="0 0 13 13" fill="none" stroke="#666" strokeWidth="1.500" className="pointer-events-none absolute inset-0 hidden peer-checked:block">
      <path d="M3 6.500l2.500 3L10 3.500" />
    </svg>
  </span>
);

const Area = ({ title, icon, items, sigma }: { title: string; icon: ReactNode; items: string[]; sigma?: boolean }) => (
  <div className="flex flex-col">
    <h3 className="flex h-5 items-center gap-2 pl-1">
      <span className="flex w-[12px] justify-center">{icon}</span>
      {title}
    </h3>
    <div className="flex h-[120px] flex-col gap-[2px] bg-white p-[2px] px-px">
      {items.map((item, i) => (
        <button key={item} className="flex h-[19px] shrink-0 items-center gap-[6px] border border-[#ababab] px-[6px] text-left whitespace-nowrap">
          {sigma && i === 1 && <Sigma className="size-[10px] stroke-[#777]" />}
          <span className="flex-1">{item}</span>
          <Arrow className="mr-1" />
        </button>
      ))}
    </div>
  </div>
);

const FieldPane = () => (
  <aside className="mt-[10px] mb-[2px] flex w-[287px] shrink-0 flex-col border-l border-[#ababab] pr-[12px] pl-3 text-[11px] text-[#444]">
    <div className="flex h-[44px] items-start pt-[12px]">
      <h2 className="flex-1 pl-px font-['Open_Sans',sans-serif] text-[20px] leading-8 font-light text-[#217346]">Polja vrtilne tabele</h2>
      <button aria-label="Možnosti podokna" className="mt-[9px] mr-[34px]">
        <Arrow className="h-[5px] w-[9px]" />
      </button>
      <button aria-label="Zapri" className="mt-[7px] mr-[5px]">
        <svg width="10" height="10" viewBox="0 0 10 10" stroke="#555" strokeWidth="1.800">
          <path d="M1 1l8 8M9 1L1 9" />
        </svg>
      </button>
    </div>
    <div className="mt-1 flex items-start justify-between">
      <p className="w-[175px] pl-[2px] leading-[15px]">Izberite polja, ki jih želite dodati poročilu:</p>
      <button aria-label="Orodja" className="flex h-[27px] w-[44px] items-center justify-between border border-[#ababab] bg-white pr-1 pl-[9px]">
        <svg width="13" height="13" viewBox="0 0 13 13" fill="none" stroke="#8c8c8c">
          <circle cx="6.500" cy="6.500" r="3.500" strokeWidth="2.200" />
          <circle cx="6.500" cy="6.500" r="5.400" strokeWidth="2" strokeDasharray="2.800 2.850" />
        </svg>
        <Arrow />
      </button>
    </div>
    <div className="mt-[12px] flex h-5 items-center border border-[#ababab] bg-white pr-[2px]">
      <input aria-label="Išči" placeholder="Išči" className="min-w-0 flex-1 pl-px outline-none placeholder:text-[#666]" />
      <FindIcon size={13} />
    </div>

    <div className="mt-4 flex h-[271px] bg-white pr-px">
      <ul className="flex-1 pl-[2px]">
        {fields.map((f) => (
          <li key={f.name} className="flex h-[19px] items-start pt-px pr-[5px]">
            <Check id={f.name} on={f.on} />
            <label htmlFor={f.name} className={clsx("flex-1 pl-[6px] leading-[14px]", f.on && "font-bold")}>
              {f.name}
            </label>
            {f.filtered && <Funnel />}
          </li>
        ))}
      </ul>
      <div className="flex py-[2px]">
        <VerticalScroll thumb="h-[220px]" />
      </div>
    </div>

    <p className="mt-4 border-t border-dotted border-[#b5b5b5] pt-[3px] pl-1 leading-[18px]">Povlecite polja med spodnjimi območji:</p>
    <div className="mt-4 ml-[3px] grid grid-cols-[129px_1fr]">
      <div className="border-r border-b border-[#ababab] pr-[5px] pb-[5px]">
        <Area title="Filtri" icon={<Funnel />} items={["Leto", "Leto mesec", "Konto", "Konto razred", "Vrsta prometa"]} />
      </div>
      <div className="border-b border-[#ababab] pb-[5px] pl-[3px]">
        <Area
          title="Stolpci"
          icon={
            <svg width="11" height="11" viewBox="0 0 11 11" fill="#888">
              <path d="M0 0h4v11H0zM5 0h1v11H5zM7 0h1v11H7zM9 0h1v11H9z" />
            </svg>
          }
          items={["Stroškovno mesto", "Vrednosti"]}
          sigma
        />
      </div>
      <div className="border-r border-[#ababab] pt-[6px] pr-[5px]">
        <Area
          title="Vrstice"
          icon={
            <svg width="11" height="10" viewBox="0 0 11 10" fill="#888">
              <path d="M0 0h11v3H0zM0 4h11v1H0zM0 6h11v1H0zM0 8h11v1H0z" />
            </svg>
          }
          items={["Konto skupina", "Konto naziv"]}
        />
      </div>
      <div className="pt-[6px] pl-[3px]">
        <Area title="Vrednosti" icon={<Sigma />} items={["Vsota od Breme", "Vsota od Dobro"]} />
      </div>
    </div>

    <div className="mt-auto mb-[7px] flex items-center pl-[3px]">
      <Check id="defer" />
      <label htmlFor="defer" className="flex-1 pl-[6px]">
        Odloži posodobitev postavitve
      </label>
      <button disabled className="h-[22px] w-[58px] bg-[#fbfbfb] text-[#a6a6a6]">
        Posodobi
      </button>
    </div>
  </aside>
);

/* ---------- status bar ---------- */

const StatusBar = () => (
  <footer className="flex h-[21px] shrink-0 items-center border-t border-[#c6c6c6] bg-[#f1f1f1] text-[10px] text-[#444]">
    <span className="w-[79px] pl-1 text-[11px]">Pripravljen</span>
    <svg width="13" height="13" viewBox="0 0 13 13" fill="none" stroke="#555">
      <path d="M6 2.500h6.500v10H1.500V6" />
      <path d="M3 6.500h2M6 6.500h2M9 6.500h2M3 8.500h2M6 8.500h2M9 8.500h2M3 10.500h2M6 10.500h2M9 10.500h2M7 4.500h4" />
      <circle cx="3" cy="3" r="2.500" fill="#444" />
    </svg>
    <button aria-label="Navadno" className="ml-auto flex h-5 w-[38px] items-center justify-center bg-[#c6c6c6]">
      <svg width="13" height="13" viewBox="0 0 13 13" fill="none" stroke="#555">
        <path d="M.5.500h12v12H.5zM4.500.500v12M8.500.500v12M.5 4.500h12M.5 8.500h12" />
      </svg>
    </button>
    <button aria-label="Postavitev strani" className="flex h-5 w-[38px] items-center justify-center">
      <svg width="13" height="13" viewBox="0 0 13 13" fill="none" stroke="#666">
        <path d="M.5.500h12v12H.5zM3.500 2.500h6v8h-6zM5 4.500h3M5 6.500h3M5 8.500h3" />
      </svg>
    </button>
    <button aria-label="Predogled preloma" className="flex h-5 w-[38px] items-center justify-center">
      <svg width="13" height="13" viewBox="0 0 13 13" fill="none" stroke="#666">
        <path d="M.5.500h12v12H.5zM4.500.500v7M8.500.500v7M.5 7.500h8" />
      </svg>
    </button>
    <button aria-label="Pomanjšaj" className="ml-1 h-[2px] w-[7px] bg-[#555]" />
    <input
      type="range"
      aria-label="Povečava"
      defaultValue={50}
      className="mx-1 h-3 w-[100px] appearance-none bg-linear-to-b from-transparent from-45% via-[#ababab] via-50% to-transparent to-55% [&::-webkit-slider-thumb]:h-3 [&::-webkit-slider-thumb]:w-1 [&::-webkit-slider-thumb]:appearance-none [&::-webkit-slider-thumb]:bg-[#555]"
    />
    <button aria-label="Povečaj">
      <svg width="8" height="8" viewBox="0 0 8 8" stroke="#555" strokeWidth="2">
        <path d="M4 0v8M0 4h8" />
      </svg>
    </button>
    <span className="w-[49px] pr-[5px] text-right">100%</span>
  </footer>
);

const App = () => {
  return (
    <div className="flex h-screen flex-col overflow-hidden bg-[#e6e6e6] font-['Noto_Sans',sans-serif]">
      <Ribbon />
      <FormulaBar />
      <div className="flex min-h-0 flex-1">
        <main className="flex min-w-0 flex-1 flex-col">
          <div className="flex min-h-0 flex-1 pt-[10px]">
            <div className="relative flex-1 overflow-hidden border-r border-[#999] bg-white">
              <div className="absolute inset-x-0 top-0 h-5 border-b border-[#999] bg-[#e6e6e6]" />
              <div className="relative">
                <Sheet />
              </div>
              <PieChart />
            </div>
            <div className="flex w-[21px] pt-[2px] pl-[3px]">
              <VerticalScroll thumb="h-[250px]" />
            </div>
          </div>
          <SheetTabs />
        </main>
        <FieldPane />
      </div>
      <StatusBar />
    </div>
  );
};

export default App;
